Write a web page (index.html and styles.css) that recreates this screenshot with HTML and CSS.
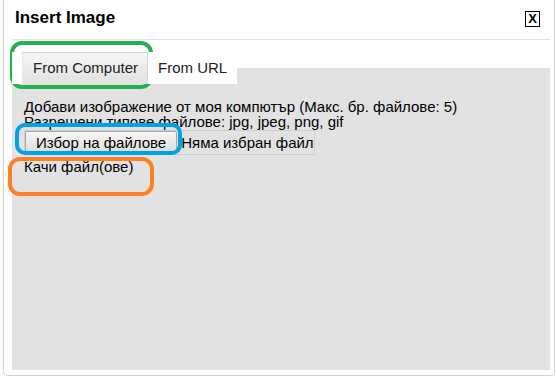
FILE: index.html
```html
<!DOCTYPE html>
<html>
<head>
  <title>Insert Image</title>
  <meta name="viewport" content="width=device-width, initial-scale=1.0">
  <link rel="stylesheet" href="styles.css">
</head>
<body>

  <div class="dialog">
    <div class="dialog-head">
      <h1>Insert Image</h1>
      <span class="close-btn">X</span>
    </div>

    <ul class="tabs">
      <li class="tab active">From Computer</li>
      <li class="tab">From URL</li>
    </ul>

    <div class="panel">
      <p class="info">
        Добави изображение от моя компютър (Макс. бр. файлове: 5)<br>
        Разрешени типове файлове: jpg, jpeg, png, gif
      </p>
      <div class="file-input">
        <span class="file-btn">Избор на файлове</span>
        <span class="file-name">Няма избран файл</span>
      </div>
      <p class="upload">Качи файл(ове)</p>
    </div>
  </div>

  <!-- paint marks drawn over the screenshot -->
  <div class="mark mark-green"></div>
  <div class="mark mark-blue"></div>
  <div class="mark mark-orange"></div>

</body>
</html>
```

FILE: styles.css
```css
body {
  font-family: "Liberation Sans", Arial, sans-serif;
  margin: 0;
  background-color: #fff;
  color: #000;
}
.dialog {
  margin: 0 1px 0 3px;
  padding: 0 4px 5px 8px;
  border: 1px solid #d2d2d2;
  border-top: none;
  border-radius: 0 0 5px 5px;
  box-shadow: 0 1px 2px rgba(0, 0, 0, 0.08);
  background-color: #fff;
}
.dialog-head {
  display: flex;
  justify-content: space-between;
  align-items: flex-start;
  height: 40px;
  box-sizing: border-box;
  padding: 8px 10px 0 3px;
  border-bottom: 1px solid #e2e2e2;
}
.dialog-head h1 {
  margin: 0;
  font-size: 17px;
  line-height: 20px;
  font-weight: bold;
}
.close-btn {
  margin-top: 3px;
  width: 13px;
  height: 14px;
  border: 1px solid #000;
  font-size: 13px;
  font-weight: bold;
  line-height: 14px;
  text-align: center;
}
.tabs {
  list-style: none;
  display: flex;
  align-items: flex-end;
  gap: 4px;
  width: max-content;
  margin: 12px 0 -16px 0;
  padding: 0 0 0 10px;
  background-color: #fff;
  position: relative;
  z-index: 1;
}
.tab {
  font-size: 15px;
  line-height: 17px;
  color: #222;
  padding: 1px 10px 7px 6px;
  margin-bottom: 1px;
  background-color: #fff;
}
.tab.active {
  padding: 6px 10px 8px 11px;
  margin-bottom: 0;
  border-top: 1px solid #d4d4d4;
  background: linear-gradient(#f7f7f7, #e6e6e6 70%, #e2e2e2);
  box-shadow: inset -1px 0 #d6d6d6, inset 1px 0 #e8e8e8;
}
.panel {
  background-color: #e2e2e2;
  height: 302px;
  box-sizing: border-box;
  padding: 31px 12px;
  font-size: 15px;
  line-height: 15px;
}
.info {
  margin: 0 0 1px 0;
}
.file-input {
  display: inline-flex;
  align-items: flex-start;
  height: 25px;
  box-sizing: border-box;
  border: 1px solid #cfcfcf;
  white-space: nowrap;
}
.file-btn {
  padding: 2px 10px 1px 10px;
  line-height: 17px;
  border: 1px solid #a8a8a8;
  border-radius: 2px;
  background: linear-gradient(#f6f6f6, #dedede);
}
.file-name {
  margin-left: 4px;
  line-height: 23px;
}
.upload {
  margin: 4px 0 0 0;
}
.mark {
  position: absolute;
  box-sizing: border-box;
  border: 4px solid;
  border-radius: 12px;
}
.mark-green {
  left: 10px;
  top: 41px;
  width: 143px;
  height: 48px;
  border-color: #22b14c;
}
.mark-blue {
  left: 15px;
  top: 123px;
  width: 167px;
  height: 32px;
  border-color: #00a2e8;
  border-radius: 10px;
}
.mark-orange {
  left: 8px;
  top: 157px;
  width: 146px;
  height: 39px;
  border-color: #ff7f27;
}
```
